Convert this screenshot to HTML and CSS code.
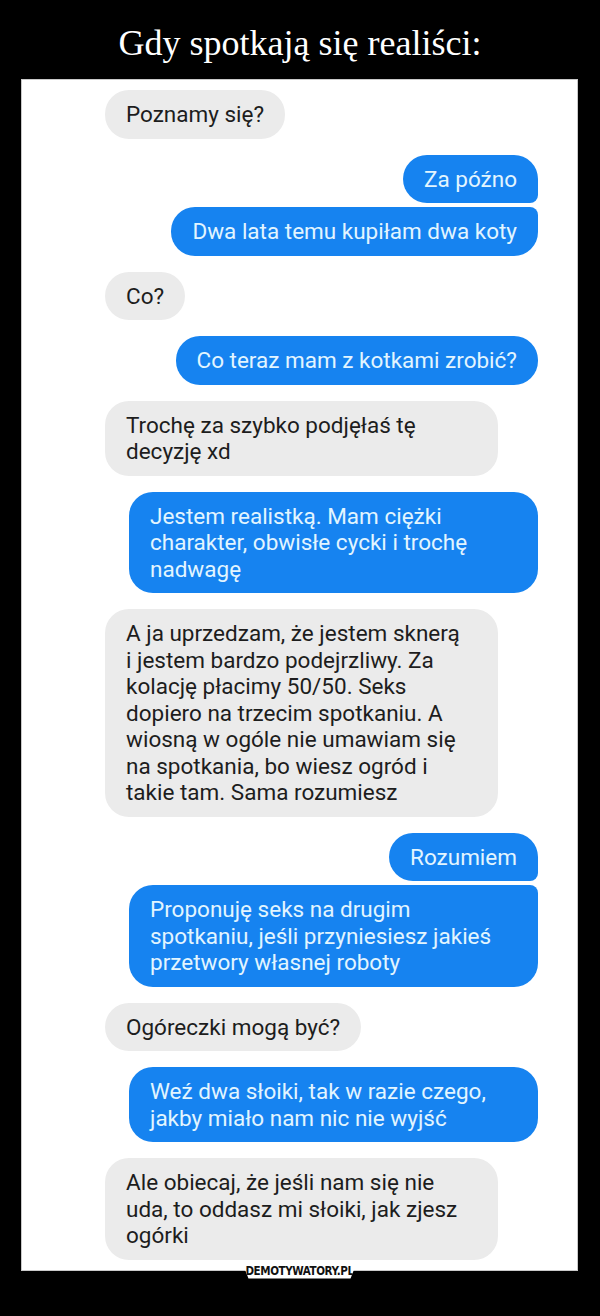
FILE: index.html
```html
<!DOCTYPE html>
<html lang="pl">
<head>
    <meta charset="UTF-8">
    <meta name="viewport" content="width=device-width, initial-scale=1.0">
    <title>Gdy spotkają się realiści</title>
    <link rel="stylesheet" href="styles.css">
</head>
<body>
<h1 class="title">Gdy spotkają się realiści:</h1>

<div class="panel">
    <div class="chat">
        <div class="msg in">Poznamy się?</div>
        <div class="msg out top">Za późno</div>
        <div class="msg out bottom">Dwa lata temu kupiłam dwa koty</div>
        <div class="msg in">Co?</div>
        <div class="msg out">Co teraz mam z kotkami zrobić?</div>
        <div class="msg in wide">Trochę za szybko podjęłaś tę<br>decyzję xd</div>
        <div class="msg out wide">Jestem realistką. Mam ciężki<br>charakter, obwisłe cycki i trochę<br>nadwagę</div>
        <div class="msg in wide">A ja uprzedzam, że jestem sknerą<br>i jestem bardzo podejrzliwy. Za<br>kolację płacimy 50/50. Seks<br>dopiero na trzecim spotkaniu. A<br>wiosną w ogóle nie umawiam się<br>na spotkania, bo wiesz ogród i<br>takie tam. Sama rozumiesz</div>
        <div class="msg out top">Rozumiem</div>
        <div class="msg out wide bottom">Proponuję seks na drugim<br>spotkaniu, jeśli przyniesiesz jakieś<br>przetwory własnej roboty</div>
        <div class="msg in">Ogóreczki mogą być?</div>
        <div class="msg out wide">Weź dwa słoiki, tak w razie czego,<br>jakby miało nam nic nie wyjść</div>
        <div class="msg in wide">Ale obiecaj, że jeśli nam się nie<br>uda, to oddasz mi słoiki, jak zjesz<br>ogórki</div>
    </div>
</div>
<div class="footer">
    <div class="brand">DEMOTYWATORY.PL</div>
</div>
</body>
</html>
```

FILE: styles.css
```css
body {
    margin: 0;
    background-color: #000;
    font-family: Roboto, 'Noto Sans', sans-serif;
}
.title {
    margin: 0;
    padding: 23px 0 16px;
    color: #fff;
    font-family: 'Liberation Serif', 'Times New Roman', serif;
    font-weight: normal;
    font-size: 36px;
    line-height: 40px;
    text-align: center;
}
.panel {
    box-sizing: border-box;
    width: 557px;
    margin-left: 21px;
    background: #fff;
    border: 1px solid #c9c9c9;
}
.chat {
    display: flex;
    flex-direction: column;
    padding: 10px 39px 10px 83px;
}
.msg {
    padding: 11px 21px;
    font-size: 22.5px;
    line-height: 26.5px;
    border-radius: 24px;
    margin-top: 16px;
    white-space: nowrap;
}
.msg:first-child {
    margin-top: 0;
}
.in {
    align-self: flex-start;
    background: #ebebeb;
    color: #1d1d1d;
}
.out {
    align-self: flex-end;
    background: #1683f0;
    color: #e2f5ff;
}
.in.wide {
    width: 351px; /* 393px bubble */
}
.out.wide {
    width: 367px; /* 409px bubble */
}
/* grouped outgoing messages */
.out.top {
    border-bottom-right-radius: 8px;
}
.out.bottom {
    margin-top: 4px;
    border-top-right-radius: 8px;
}

/* logo tab hanging under the panel */
.footer {
    display: flex;
    justify-content: center;
    width: 557px;
    margin-left: 21px;
}
.brand {
    position: relative;
    margin-top: -10px;
    width: 116px;
    height: 18px;
    background: #fff;
    clip-path: polygon(0 0, 100% 0, 94% 100%, 6% 100%);
    color: #111;
    font-family: 'DejaVu Sans Condensed', 'DejaVu Sans', sans-serif;
    font-weight: bold;
    font-size: 11.5px;
    letter-spacing: -0.4px;
    line-height: 20px;
    text-align: center;
}
```
